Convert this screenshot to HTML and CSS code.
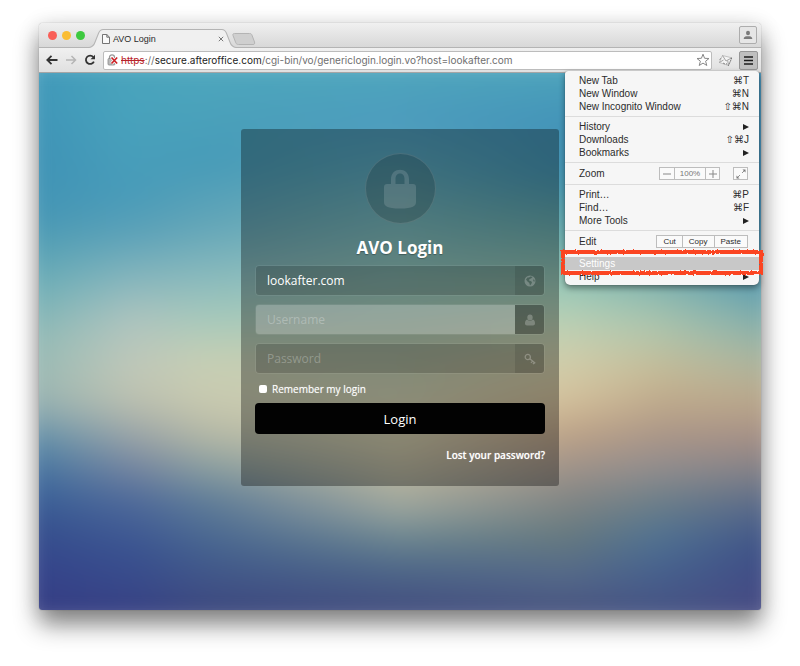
FILE: index.html
```
<!DOCTYPE html>
<html lang="en">
<head>
<meta charset="utf-8">
<title>AVO Login</title>
<link rel="stylesheet" href="styles.css">
</head>
<body>
<svg class="defs" width="0" height="0" aria-hidden="true">
  <filter id="rough" x="-5%" y="-20%" width="110%" height="140%">
    <feTurbulence type="fractalNoise" baseFrequency="0.5" numOctaves="2" seed="4" result="n"/>
    <feDisplacementMap in="SourceGraphic" in2="n" scale="3" xChannelSelector="R" yChannelSelector="G"/>
  </filter>
</svg>
<div class="window">
  <header class="tabstrip">
    <div class="lights"><span class="light red"></span><span class="light yellow"></span><span class="light green"></span></div>
    <div class="tab">
      <svg class="tab-shape" viewBox="0 0 145 19" preserveAspectRatio="none" aria-hidden="true"><path d="M0 18.500C4 18 5 16 6 13L9.500 4C10.500 1.500 11.500.5 14 .5H131C133.500.5 134.500 1.500 135.500 4L139 13C140 16 141 18 145 18.500V19H0Z" fill="#f0f0f0"/><path d="M0 18.500C4 18 5 16 6 13L9.500 4C10.500 1.500 11.500.5 14 .5H131C133.500.5 134.500 1.500 135.500 4L139 13C140 16 141 18 145 18.500" fill="none" stroke="#b4b4b4"/></svg>
      <svg class="doc" viewBox="0 0 8 10" aria-hidden="true"><path d="M.5.5H4.800L7.500 3.200V9.500H.5ZM4.800.5V3.200H7.500" fill="#fafafa" stroke="#666" stroke-width=".9"/></svg>
      <span class="tab-title">AVO Login</span>
      <button class="plain" aria-label="Close tab"><svg width="6" height="6" viewBox="0 0 6 6"><path d="M.8.8 5.200 5.200M5.200.8.8 5.200" stroke="#777"/></svg></button>
    </div>
    <button class="plain newtab" aria-label="New tab"><svg width="24" height="12" viewBox="0 0 24 12"><path d="M2.500.5H17.500C19 .5 19.500 1 20 2.200L22.500 9C23 10.500 22.500 11.500 21 11.500H6.500C5 11.500 4.300 11 3.800 9.800L1 2.500C.6 1.200 1 .5 2.500.5Z" fill="#cfcfcf" stroke="#b4b4b4"/></svg></button>
    <button class="profile" aria-label="Profile"><svg width="10" height="10" viewBox="0 0 10 10"><ellipse cx="5" cy="3" rx="2" ry="2.300" fill="#7b7b7b"/><path d="M.8 9V8C1.200 6.600 3 6.200 5 6.200S8.800 6.600 9.200 8V9Z" fill="#7b7b7b"/></svg></button>
  </header>
  <nav class="toolbar">
    <button class="plain" aria-label="Back"><svg width="12" height="12" viewBox="0 0 12 12"><path d="M11.500 6H1.500M5.500 1.800 1.300 6 5.500 10.200" fill="none" stroke="#333" stroke-width="1.800"/></svg></button>
    <button class="plain" aria-label="Forward"><svg width="12" height="12" viewBox="0 0 12 12"><path d="M1 6H10M6.500 2 10.500 6 6.500 10" fill="none" stroke="#b5b5b5" stroke-width="1.500"/></svg></button>
    <button class="plain" aria-label="Reload"><svg width="12" height="12" viewBox="0 0 12 12"><path d="M9.300 3A4.200 4.200 0 1 0 9.900 7.600" fill="none" stroke="#333" stroke-width="1.800"/><path d="M11 .8V5.300H6.500Z" fill="#333"/></svg></button>
    <div class="address">
      <svg width="12" height="12" viewBox="0 0 12 12" aria-hidden="true"><path d="M2.500 5V3.200C2.500 0 7.500 0 7.500 3.200V5" fill="none" stroke="#999" stroke-width="1.300"/><rect x="1" y="4.500" width="7" height="6.500" rx="1" fill="#bbb" stroke="#888" stroke-width=".8"/><path d="M4.500 3.500 10.200 9.500M10.200 3.500 4.500 9.500" stroke="#fff" stroke-width="3"/><path d="M4.500 3.500 10.200 9.500M10.200 3.500 4.500 9.500" stroke="#cc1f24" stroke-width="1.600"/></svg>
      <span class="url"><s>https</s>://<b>secure.afteroffice.com</b>/cgi-bin/vo/genericlogin.login.vo?host=lookafter.com</span>
      <button class="plain star" aria-label="Bookmark"><svg width="14" height="14" viewBox="0 0 14 14"><path d="M7 1.200 8.600 5.300 13 5.500 9.600 8.200 10.800 12.500 7 10.100 3.200 12.500 4.400 8.200 1 5.500 5.400 5.300Z" fill="#fff" stroke="#888" stroke-linejoin="round"/></svg></button>
    </div>
    <button class="plain" aria-label="Mail extension"><svg width="13" height="13" viewBox="1 0 13 13"><path d="M4.500 1.500 13.800 3.800 10.500 11.500 1.300 8.500Z" fill="#f4f4f4" stroke="#b5b5b5" stroke-width=".8"/><path d="M4.500 1.500 8 7 13.800 3.800M1.300 8.500 5.500 6M10.500 11.500 9.700 6.500" fill="none" stroke="#999" stroke-width=".9"/><path d="M8 9.500 10.500 11.500 13.800 3.800" fill="none" stroke="#777" stroke-dasharray="1.500 1"/><path d="M1.500 5.500 3 4.500M5 9 7 10" stroke="#888"/></svg></button>
    <button class="menu-button" aria-label="Menu" aria-expanded="true"><svg width="9" height="9" viewBox="0 0 9 9"><path d="M0 1H9M0 4.500H9M0 8H9" stroke="#1c1c1c" stroke-width="1.600"/></svg></button>
  </nav>
  <main class="page">
    <div class="wallpaper" aria-hidden="true"><i class="c0"></i><i class="c1"></i><i class="c2"></i><i class="c3"></i><i class="c4"></i><i class="c5"></i><i class="c6"></i></div>
    <form class="card">
      <div class="badge"><svg width="34" height="40" viewBox="0 0 34 40" aria-hidden="true"><path fill-rule="evenodd" d="M8 15V10C8-2.500 26-2.500 26 10V15H30C32 15 33 16 33 18V33C33 37 30 39.500 17 39.500S1 37 1 33V18C1 16 2 15 4 15ZM12.500 15H21.500V10C21.500 2.800 12.500 2.800 12.500 10Z"/></svg></div>
      <h1>AVO Login</h1>
      <div class="field"><input id="host" type="text" value="lookafter.com" aria-label="Host"><label for="host"><svg width="12" height="12" viewBox="0 0 12 12" aria-hidden="true"><path fill-rule="evenodd" d="M6 .5A5.500 5.500 0 1 0 6 11.500 5.500 5.500 0 0 0 6 .5ZM6.500 1.500 8.500 2 7 3.500 5.500 4 5 5.500 6.500 6 8 7 7.300 9 6 10.500 5.300 8 3.500 6.500 2 4.500 3.500 2.500 5 2.500ZM9.300 4.200 10.600 5 10.300 7 9.300 6Z"/></svg></label></div>
      <div class="field active"><input id="user" type="text" placeholder="Username" aria-label="Username"><label for="user"><svg width="12" height="12" viewBox="0 0 12 12" aria-hidden="true"><path d="M6 .5A2.700 2.900 0 0 1 8.700 3.400 2.700 2.900 0 0 1 6 6.300 2.700 2.900 0 0 1 3.300 3.400 2.700 2.900 0 0 1 6 .5ZM3.200 5.500C1.500 6 1 7.500 1 9.500 1 10.800 1.800 11.500 3 11.500H9C10.200 11.500 11 10.800 11 9.500 11 7.500 10.500 6 8.800 5.500 7.500 7.300 4.500 7.300 3.200 5.500Z"/></svg></label></div>
      <div class="field"><input id="pass" type="password" placeholder="Password" aria-label="Password"><label for="pass"><svg width="12" height="12" viewBox="0 0 12 12" aria-hidden="true"><g fill="none" stroke="#8f8f82" stroke-width="1.300"><circle cx="3.800" cy="4" r="2.600"/><path d="M5.800 5.800 11.300 10.300M8.500 8 7 9.800M10.300 9.500 9 11.200"/></g></svg></label></div>
      <div class="remember"><input id="remember" type="checkbox"><label for="remember">Remember my login</label></div>
      <button class="login" type="submit">Login</button>
      <a class="lost" href="#">Lost your password?</a>
    </form>
  </main>
  <div class="menu">
    <section>
      <button class="item">New Tab<span>⌘T</span></button>
      <button class="item">New Window<span>⌘N</span></button>
      <button class="item">New Incognito Window<span>⇧⌘N</span></button>
    </section>
    <section>
      <button class="item">History<i class="arrow"></i></button>
      <button class="item">Downloads<span>⇧⌘J</span></button>
      <button class="item">Bookmarks<i class="arrow"></i></button>
    </section>
    <section class="tools">
      <div class="tool-row">Zoom
        <div class="group zoom"><button aria-label="Zoom out"><svg width="8" height="8" viewBox="0 0 8 8"><path d="M0 4H8" stroke="#888"/></svg></button><output>100%</output><button aria-label="Zoom in"><svg width="8" height="8" viewBox="0 0 8 8"><path d="M0 4H8M4 0V8" stroke="#888"/></svg></button></div>
        <div class="group full"><button aria-label="Full screen"><svg width="10" height="10" viewBox="0 0 10 10"><path d="M6.500.5H9.500V3.500ZM.5 6.500V9.500H3.500Z" fill="#777"/><path d="M6 4 8.500 1.500M1.500 8.500 4 6" stroke="#777" stroke-width=".8"/></svg></button></div>
      </div>
    </section>
    <section>
      <button class="item">Print…<span>⌘P</span></button>
      <button class="item">Find…<span>⌘F</span></button>
      <button class="item">More Tools<i class="arrow"></i></button>
    </section>
    <section class="tools">
      <div class="tool-row">Edit
        <div class="group edit"><button>Cut</button><button>Copy</button><button>Paste</button></div>
      </div>
      <div class="last">
        <button class="item selected">Settings</button>
        <button class="item">Help<i class="arrow"></i></button>
        <div class="marker"></div>
      </div>
    </section>
  </div>
</div>
</body>
</html>
```
FILE: styles.css
```
* { box-sizing: border-box; }

body {
  margin: 0;
  min-height: 100vh;
  padding: 23px 39px 56px;
  display: flex;
  background: #fff;
  font-family: "Liberation Sans", "DejaVu Sans", sans-serif;
  font-size: 10px;
  color: #2b2b2b;
}

button, input { font: inherit; color: inherit; margin: 0; }
button { padding: 0; border: 0; background: none; }
svg { display: block; flex: none; }
.defs { position: absolute; }

.window {
  position: relative;
  flex: 1;
  min-width: 0;
  display: flex;
  flex-direction: column;
  border-radius: 4px 4px 3px 3px;
  box-shadow: 0 0 1px rgba(0, 0, 0, .45), 0 15px 24px rgba(0, 0, 0, .45), 0 3px 22px rgba(0, 0, 0, .14);
}

/* Tab strip */
.tabstrip {
  height: 25px;
  display: flex;
  align-items: center;
  padding: 0 4px 0 9px;
  border-bottom: 1px solid #b4b4b4;
  border-radius: 4px 4px 0 0;
  background: linear-gradient(#f0f0f0, #d8d8d8);
}
.lights { display: flex; gap: 5px; }
.light { width: 9px; height: 9px; border-radius: 50%; }
.red { background: #f95f58; }
.yellow { background: #fabd33; }
.green { background: #3dc93f; }
.tab {
  position: relative;
  z-index: 1;
  align-self: flex-end;
  width: 147px;
  height: 19px;
  margin: 0 0 -1px 4px;
  padding: 0 12px 0 13px;
  display: flex;
  align-items: center;
  gap: 3px;
}
.tab-shape { position: absolute; inset: 0; width: 100%; height: 100%; }
.tab > :not(.tab-shape) { position: relative; }
.doc { width: 8px; height: 10px; }
.tab-title { flex: 1; font-size: 9px; }
.plain { display: flex; align-items: center; justify-content: center; }
.newtab { align-self: flex-end; margin: 0 0 2px -4px; }
.profile {
  width: 18px;
  height: 18px;
  margin-left: auto;
  display: flex;
  align-items: center;
  justify-content: center;
  border: 1px solid #adadad;
  border-radius: 2px;
  background: #e6e6e6;
}

/* Toolbar */
.toolbar {
  height: 25px;
  padding: 0 3px 0 7px;
  display: flex;
  align-items: center;
  gap: 7px;
  border-bottom: 1px solid #a5a5a5;
  background: linear-gradient(#f0f0f0, #e0e0e0);
}
.address {
  flex: 1;
  min-width: 0;
  height: 19px;
  padding: 0 1px 0 3px;
  display: flex;
  align-items: center;
  gap: 2px;
  border: 1px solid #bcbcbc;
  border-radius: 2px;
  background: #fff;
}
.url {
  flex: 1;
  min-width: 0;
  overflow: hidden;
  white-space: nowrap;
  font-family: Inter, "Liberation Sans", sans-serif;
  color: #6f6f6f;
}
.url s { color: #b8242a; }
.url b { font-weight: 400; color: #222; }
.menu-button {
  width: 19px;
  height: 19px;
  display: flex;
  align-items: center;
  justify-content: center;
  border: 1px solid #969696;
  border-radius: 2px;
  background: #bfbfbf;
}

/* Page */
.page {
  position: relative;
  flex: 1;
  display: flex;
  justify-content: center;
  align-items: flex-start;
  padding: 56px 20px 124px;
  border-radius: 0 0 3px 3px;
  overflow: hidden;
}
.wallpaper { position: absolute; inset: -20px; filter: blur(14px); }
.wallpaper i { position: absolute; inset: 0; }
.c0 { background: linear-gradient(#419bbb, #3f93b6 19%, #4596b5 28%, #57a1b5 34%, #72b0b7 41%, #95bbb6 50%, #9db8b3 58%, #8eabb0 62%, #5a8aa8 68%, #3e689c 75%, #36518f 82%, #35428a 91%, #373c80); }
.c1 { background: linear-gradient(#4ba6bc, #48a2bc 11%, #489bb9 24%, #5ba1b8 31%, #80b3bc 38%, #adc4bf 46%, #c0c8b9 54%, #bdc1b0 60%, #9ca6a8 66%, #7485a0 72%, #4d699a 78%, #3a5390 86%, #384889 93%, #383c7f); mask-image: linear-gradient(90deg, transparent 2%, #000 15%); }
.c2 { background: linear-gradient(#4fa9be, #479bb8 19%, #64a6b8 30%, #86b8bc 38%, #a6c9bb 46%, #c6cfb4 53%, #c9cab0 60%, #b6b9a6 66%, #8a9ea0 72%, #5e7c98 78%, #45628f 86%, #3f5085 93%, #3c4479); mask-image: linear-gradient(90deg, transparent 15%, #000 25%); }
.c3 { background: linear-gradient(#50a9bd, #4c9bbd 12%, #5ba8bd 20%, #74b6bc 28%, #9ecdc0 42%, #b9ccb2 50%, #d3d3b4 61%, #cdc7a8 68%, #aeae9c 75%, #9ba59e 79%, #6d8790 84%, #4c6588 90%, #455080 96%); mask-image: linear-gradient(90deg, transparent 25%, #000 50%); }
.c4 { background: linear-gradient(#50a8bc, #4393b8 12%, #4595b4 21%, #5fa6ae 28%, #80b8b0 35%, #a3ccb8 42%, #bccfb3 47%, #d0ceab 53%, #d4c19c 60%, #bea387 66%, #a5958a 71%, #858785 77%, #64797f 84%, #53688a 91%, #4a5680 96%); mask-image: linear-gradient(90deg, transparent 50%, #000 72%); }
.c5 { background: linear-gradient(#4ba0bb, #3f8fae 30%, #90bbb0 42%, #b0c5ac 48%, #c5bb97 55%, #bea88b 61%, #a89488 67%, #918d8e 72%, #6b7e88 78%, #507292 84%, #455e8c 91%, #485584 96%); mask-image: linear-gradient(90deg, transparent 72%, #000 84%); }
.c6 { background: linear-gradient(#3a86ae, #3a82aa 25%, #5c9cb0 40%, #80adab 46%, #a9b59f 53%, #bba88b 60%, #a48e86 67%, #7e7f87 73%, #56688a 79%, #3d5187 86%, #434a85 93%, #4e5082); mask-image: linear-gradient(90deg, transparent 84%, #000 98%); }

/* Login card */
.card {
  position: relative;
  width: 318px;
  padding: 24px 14px;
  display: flex;
  flex-direction: column;
  gap: 8px;
  border-radius: 3px;
  background: rgba(0, 0, 0, .33);
  color: #fff;
  font-family: "Open Sans", sans-serif;
}
.badge {
  align-self: center;
  width: 71px;
  height: 71px;
  display: flex;
  align-items: center;
  justify-content: center;
  border: 1px solid rgba(255, 255, 255, .12);
  border-radius: 50%;
  background: rgba(0, 0, 0, .16);
}
.badge svg { fill: rgba(255, 255, 255, .14); }
.card h1 {
  margin: 5px 0 -2px;
  font-size: 17px;
  line-height: 22px;
  text-align: center;
  text-shadow: 0 1px 1px rgba(0, 0, 0, .3);
}
.field {
  height: 31px;
  display: flex;
  border: 1px solid rgba(255, 255, 255, .07);
  border-radius: 4px;
  overflow: hidden;
}
.field input {
  flex: 1;
  min-width: 0;
  padding: 0 11px;
  border: 0;
  border-radius: 0;
  outline: 0;
  background: rgba(0, 0, 0, .15);
  font-size: 12px;
}
.field input::placeholder { color: rgba(255, 255, 255, .27); opacity: 1; }
.field label {
  width: 29px;
  display: flex;
  align-items: center;
  justify-content: center;
  background: rgba(0, 0, 0, .24);
}
.field label svg { fill: rgba(255, 255, 255, .24); }
.active input { background: rgba(255, 255, 255, .24); }
.active label { background: rgba(0, 0, 0, .3); }
.remember {
  height: 13px;
  display: flex;
  align-items: center;
  gap: 5px;
  padding-left: 4px;
  text-shadow: 0 0 1px rgba(255, 255, 255, .5);
}
.remember input {
  appearance: none;
  width: 8px;
  height: 8px;
  border-radius: 2px;
  background: #fff;
}
.login {
  height: 31px;
  border-radius: 4px;
  background: #020202;
  font-size: 13px;
}
.lost {
  align-self: flex-end;
  padding: 6px 0 0;
  line-height: 14px;
  color: #fff;
  font-weight: 600;
  text-decoration: none;
  text-shadow: 0 0 1px rgba(255, 255, 255, .5);
}

/* Browser menu */
.menu {
  position: absolute;
  top: 48px;
  right: 2px;
  width: 194px;
  border-radius: 3px 3px 5px 5px;
  background: #f6f6f6;
  box-shadow: 0 0 1px rgba(0, 0, 0, .5), 0 3px 6px rgba(0, 0, 0, .4);
}
.menu section { padding: 3px 0; }
.menu section + section { border-top: 1px solid #dcdcdc; }
.menu .tools { padding: 0; }
.item {
  width: 100%;
  height: 13px;
  padding: 0 10px 0 14px;
  display: flex;
  align-items: center;
  justify-content: space-between;
}
.arrow {
  border-left: 6px solid #222;
  border-top: 3px solid transparent;
  border-bottom: 3px solid transparent;
}
.tool-row {
  height: 21px;
  padding: 0 11px 0 14px;
  display: flex;
  align-items: center;
}
.group {
  height: 13px;
  display: flex;
  border: 1px solid #bdbdbd;
  background: #fafafa;
  font-size: 8px;
}
.group > * { display: flex; align-items: center; justify-content: center; }
.group > * + * { border-left: 1px solid #bdbdbd; }
.zoom { margin-left: auto; color: #777; }
.zoom button { width: 14px; }
.zoom output { width: 31px; }
.full { width: 15px; margin-left: 13px; justify-content: center; }
.edit { margin-left: auto; }
.edit button { padding: 0 6px; }
.last { position: relative; padding: 5px 0 2px; }
.selected { background: #c8c8c8; color: #fff; }
.marker {
  position: absolute;
  inset: -2px -4px 10px -4px;
  border: 4px solid #fb4524;
  filter: url(#rough);
  pointer-events: none;
}
```
